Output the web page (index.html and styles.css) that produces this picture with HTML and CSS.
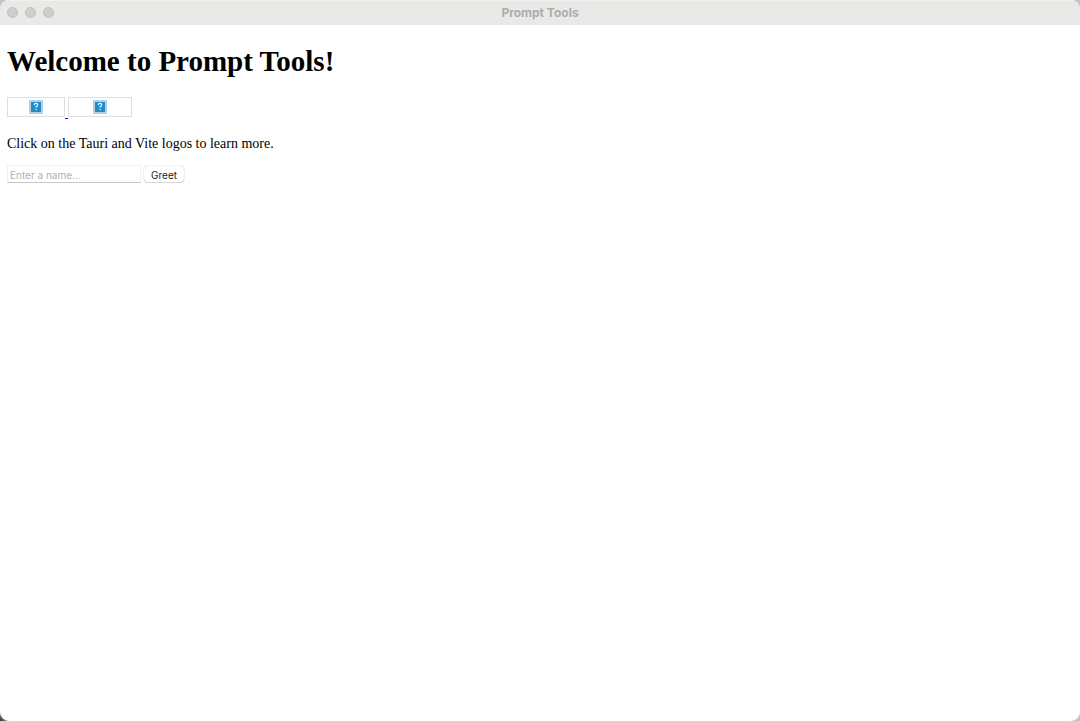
FILE: index.html
```html
<!DOCTYPE html>
<html lang="en">
<head>
  <meta charset="utf-8">
  <title>Prompt Tools</title>
  <link rel="stylesheet" href="styles.css">
</head>
<body>
  <div class="window">
    <header class="titlebar">
      <div class="lights"><span class="light"></span><span class="light"></span><span class="light"></span></div>
      <div class="window-title">Prompt Tools</div>
    </header>
    <main class="content">
      <h1 class="heading">Welcome to Prompt Tools!</h1>
      <div class="logos">
        <a class="logo" href="#tauri" aria-label="Tauri logo">
          <svg class="missing" viewBox="0 0 14 14" aria-hidden="true"><rect width="14" height="14" fill="#a9cfe9"/><rect x="1" y="1" width="12" height="12" fill="#d3e6f3"/><rect x="1.8" y="1.8" width="10.4" height="10.4" fill="#258bc5"/><path d="M5.2 5.3V4.9C5.2 3.8 6 3.4 7 3.4s1.8.5 1.8 1.4C8.8 6 7 6 7 7.7M7 9v1.3" fill="none" stroke="#fff" stroke-width="1.1"/></svg>
        </a>
        <span class="link-space"></span>
        <a class="logo logo-wide" href="#vite" aria-label="Vite logo">
          <svg class="missing" viewBox="0 0 14 14" aria-hidden="true"><rect width="14" height="14" fill="#a9cfe9"/><rect x="1" y="1" width="12" height="12" fill="#d3e6f3"/><rect x="1.8" y="1.8" width="10.4" height="10.4" fill="#258bc5"/><path d="M5.2 5.3V4.9C5.2 3.8 6 3.4 7 3.4s1.8.5 1.8 1.4C8.8 6 7 6 7 7.7M7 9v1.3" fill="none" stroke="#fff" stroke-width="1.1"/></svg>
        </a>
      </div>
      <p class="hint">Click on the Tauri and Vite logos to learn more.</p>
      <form class="greet">
        <input class="name" type="text" placeholder="Enter a name..." aria-label="Name">
        <button class="button" type="button">Greet</button>
      </form>
    </main>
  </div>
</body>
</html>
```
FILE: styles.css
```css
* {
  box-sizing: border-box;
}

body {
  margin: 0;
  background: radial-gradient(circle at bottom left, #333 0, #c4c4c4 12px);
  color: #000;
  font-family: "Liberation Serif", "Times New Roman", serif;
}

.window {
  min-height: 100vh;
  overflow: hidden;
  border-radius: 9px;
  background: #fff;
}

.titlebar {
  display: grid;
  grid-template-columns: 1fr auto 1fr;
  align-items: center;
  height: 25px;
  padding: 0 7px;
  background: #e9e9e8;
  box-shadow: inset 0 1px #f0f0ef;
}

.lights {
  display: flex;
  gap: 7px;
}

.light {
  width: 11px;
  height: 11px;
  border: 1px solid #bfbfbe;
  border-radius: 50%;
  background: #cececd;
}

.window-title {
  color: #adadac;
  font: bold 12px/17px Inter, sans-serif;
}

.content {
  padding: 20px 7px;
}

.heading {
  margin: 0 0 19px;
  font-size: 29px;
  line-height: 33px;
}

.logos {
  display: flex;
  align-items: flex-end;
  height: 22px;
}

.logo {
  display: flex;
  align-items: center;
  justify-content: center;
  width: 58px;
  height: 21px;
  margin-bottom: 1px;
  border: 1px solid #dedede;
}

.logos .logo {
  height: 20px;
  margin-bottom: 2px;
}

.logo-wide {
  width: 64px;
}

.link-space {
  width: 3px;
  border-bottom: 1px solid #00f;
}

.missing {
  width: 14px;
  height: 14px;
}

.hint {
  margin: 16px 0 13px;
  font-size: 14px;
  line-height: 17px;
}

.greet {
  display: flex;
  align-items: center;
  gap: 3px;
}

.name,
.button {
  font: 10px/12px Inter, sans-serif;
}

.name {
  width: 134px;
  height: 18px;
  padding: 3px 2px 1px;
  border: 1px solid #f3f3f3;
  border-bottom-color: #c6c6c6;
  background: #fff;
}

.name::placeholder {
  color: #b0b0b0;
  opacity: 1;
}

.button {
  height: 16px;
  padding: 1px 7px 0;
  border: 0;
  border-radius: 4px;
  background: #fff;
  box-shadow: 0 0 1px #999, 0 1px 1px #ddd;
  color: #222;
}
```
